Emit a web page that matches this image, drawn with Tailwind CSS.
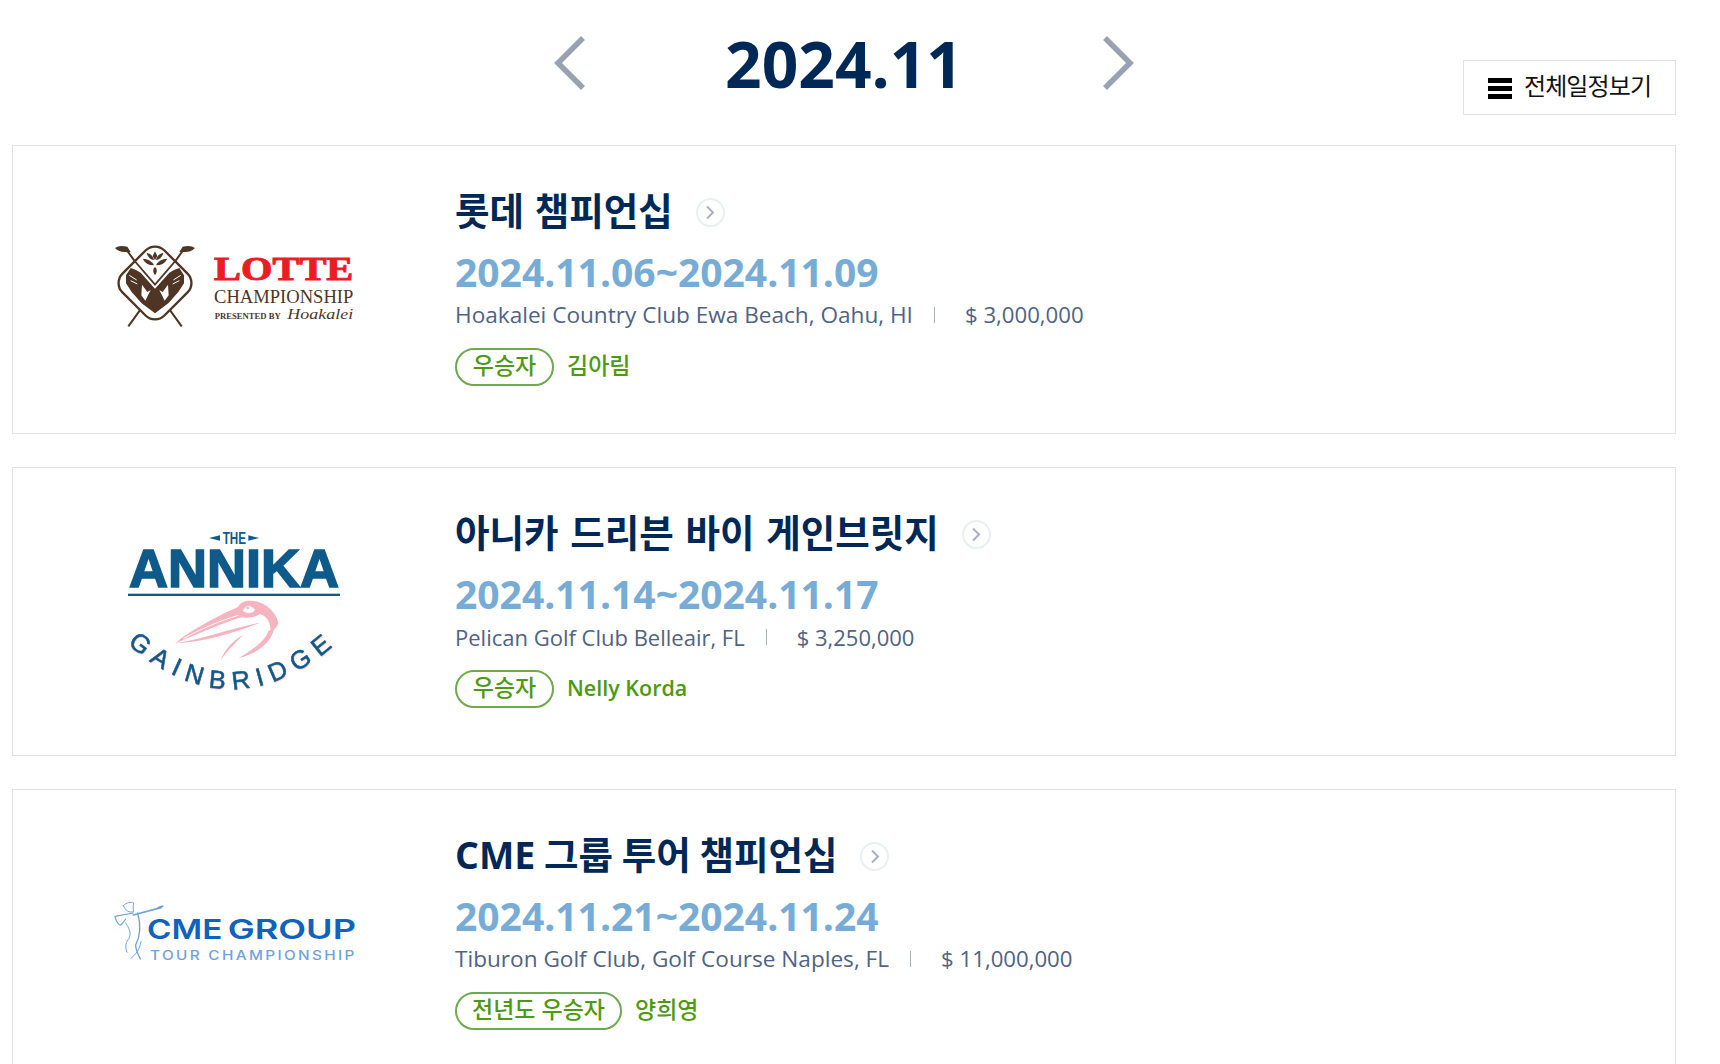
<!DOCTYPE html>
<html lang="ko">
<head>
  <meta charset="UTF-8" />
  <title>대회일정</title>
  <script src="https://cdn.jsdelivr.net/npm/@tailwindcss/browser@4"></script>
</head>
<body class="bg-white h-screen overflow-hidden font-['Open_Sans','Noto_Sans_CJK_KR',sans-serif]">

  <!-- 월 선택 -->
  <div class="relative h-[145px] mx-[12px]">
    <div class="flex items-start pl-[541px]">
      <button class="mt-[36px] w-[34px]">
        <svg width="34" height="54" viewBox="0 0 34 54" fill="none" stroke="#98a2b3" stroke-width="5.5"><path d="M30 2 L5 27 L30 52" /></svg>
      </button>
      <div class="w-[514px] text-center text-[64px] leading-[64px] mt-[32px] font-bold text-[#002856]">2024.11</div>
      <button class="mt-[36px] w-[34px]">
        <svg width="34" height="54" viewBox="0 0 34 54" fill="none" stroke="#98a2b3" stroke-width="5.5"><path d="M4 2 L29 27 L4 52" /></svg>
      </button>
    </div>
    <a class="absolute right-[32px] top-[60px] w-[213px] h-[55px] border border-[#e2e2e2] flex items-center pl-[24px] gap-[12px] text-[24px] tracking-[-0.9px] text-[#111]">
      <span class="w-[24px] h-[21px] flex flex-col justify-between mt-[2px]">
        <i class="block h-[5px] bg-black"></i><i class="block h-[5px] bg-black"></i><i class="block h-[5px] bg-black"></i>
      </span>
      <span class="pb-[3px]">전체일정보기</span>
    </a>
  </div>

  <div class="flex flex-col gap-[33px] ml-[12px] w-[1664px]">

    <!-- 롯데 -->
    <div class="flex h-[289px] border border-[#e2e2e2]">
      <div class="w-[442px] shrink-0 flex items-center">
        <svg class="ml-[77px] mb-[13px]" width="300" height="130" viewBox="0 0 900 390">
          <g transform="translate(60 60)">
            <path d="M50 36 L215 265 M220 36 L55 265" stroke="#4f3524" stroke-width="6" fill="none" />
            <path d="M15 30 Q28 20 52 26 L62 42 L48 42 Q28 44 15 30z M255 30 Q242 20 218 26 L208 42 L222 42 Q242 44 255 30z" fill="#4f3524" />
            <rect x="-89" y="-89" width="178" height="178" rx="40" fill="#fff" stroke="#4f3524" stroke-width="7" transform="translate(135 135) rotate(45)" />
            <path d="M75 70 L135 140 L195 70" fill="none" stroke="#4f3524" stroke-width="5" />
            <path d="M48 112 L62 90 L78 96 L92 104 L135 152 L178 104 L192 96 L208 90 L222 112 L222 136 L205 162 L175 196 L135 226 L95 196 L65 162 L48 136z" fill="#4f3524" />
            <path d="M58 112 L80 126 M62 128 L82 138 M212 112 L190 126 M208 128 L188 138" stroke="#fff" stroke-width="3" fill="none" />
            <path d="M96 140 L112 162 L122 156 L114 172 L106 188 L94 172z M174 140 L158 162 L148 156 L156 172 L164 188 L176 172z" fill="#fff" />
            <path d="M110 44 Q128 48 133 66 Q114 64 110 44z M160 44 Q142 48 137 66 Q156 64 160 44z M135 40 L142 54 L135 66 L128 54z M98 62 Q122 62 132 82 Q108 82 98 62z M172 62 Q148 62 138 82 Q162 82 172 62z M135 86 Q146 98 135 112 Q124 98 135 86z" fill="#4f3524" />
          </g>
          <text x="372" y="187" textLength="418" lengthAdjust="spacingAndGlyphs" font-family="Liberation Serif" font-weight="700" font-size="101" stroke="#ed1c24" stroke-width="3" fill="#ed1c24">LOTTE</text>
          <text x="372" y="254" textLength="418" lengthAdjust="spacingAndGlyphs" font-family="Liberation Serif" font-size="59" fill="#4f3524">CHAMPIONSHIP</text>
          <text x="374" y="304" textLength="198" lengthAdjust="spacingAndGlyphs" font-family="Liberation Serif" font-weight="700" font-size="27" fill="#4f3524">PRESENTED BY</text>
          <text x="592" y="304" textLength="198" lengthAdjust="spacingAndGlyphs" font-family="Liberation Serif" font-style="italic" font-size="46" fill="#4f3524">Hoakalei</text>
        </svg>
      </div>
      <div class="pt-[43px]">
        <div class="flex items-center h-[44px]">
          <h2 class="text-[37.5px] [word-spacing:1px] font-bold leading-[44px] text-[#002856]">롯데 챔피언십</h2>
          <span class="ml-[23px] mt-[2px] w-[29px] h-[29px] rounded-full border-2 border-[#eceff1] flex items-center justify-center">
            <svg width="10" height="15" viewBox="0 0 10 15" fill="none" stroke="#a9afbd" stroke-width="2"><path d="M2 1.5 L8 7.5 L2 13.5" /></svg>
          </span>
        </div>
        <p class="mt-[19px] h-[40px] text-[39px] leading-[40px] font-bold text-[#76acd6]">2024.11.06~2024.11.09</p>
        <div class="mt-[8px] h-[30px] flex items-center text-[22.6px] leading-[30px] text-[#4f6384]">
          <span>Hoakalei Country Club Ewa Beach, Oahu, HI</span>
          <i class="block ml-[21px] mr-[30px] w-px h-[16px] bg-[#a9b1bd]"></i>
          <span class="text-[22.2px]">$ 3,000,000</span>
        </div>
        <div class="mt-[18px] flex items-center">
          <span class="h-[38px] w-[99px] rounded-full border-2 border-[#6ea94c] flex items-center justify-center text-[23px] font-medium pb-[3px] text-[#4e9a0e]">우승자</span>
          <span class="ml-[13px] text-[23px] font-medium pb-[3px] text-[#4e9a0e]">김아림</span>
        </div>
      </div>
    </div>

    <!-- 아니카 -->
    <div class="flex h-[289px] border border-[#e2e2e2]">
      <div class="w-[442px] shrink-0 flex items-center">
        <svg class="ml-[97px] mb-[4px]" width="250" height="180" viewBox="0 0 750 540">
          <path d="M297 54 L330 46 L330 62z M448 54 L415 46 L415 62z" fill="#0e5a8a" />
          <text x="338" y="72" textLength="70" lengthAdjust="spacingAndGlyphs" font-family="Liberation Sans" font-weight="700" font-size="50" fill="#0e5a8a">THE</text>
          <text x="57" y="202" textLength="630" lengthAdjust="spacingAndGlyphs" font-family="Liberation Sans" font-weight="700" font-size="160" stroke="#0e5a8a" stroke-width="5" fill="#0e5a8a">ANNIKA</text>
          <rect x="54" y="221" width="636" height="7" fill="#0e5a8a" />
          <g transform="translate(180 210)">
            <path d="M15 160 C60 120 150 75 205 50 C210 38 225 30 250 33 C290 38 320 70 325 100 C320 115 310 120 300 130 C305 105 295 80 270 72 C255 82 235 85 215 82 C150 100 80 135 15 160z" fill="#f7b3c0" />
            <path d="M40 146 C90 118 150 92 205 76 M60 145 C110 125 160 105 215 90" stroke="#fff" stroke-width="3" fill="none" />
            <path d="M218 62 C225 44 245 42 256 60 C248 72 230 74 218 62z" fill="#fff" stroke="#f7b3c0" stroke-width="2" />
            <circle cx="233" cy="54" r="4" fill="#f7b3c0" />
            <path d="M15 160 C90 150 180 115 270 98 C200 125 110 155 15 160z" fill="#f7b3c0" />
            <path d="M220 135 C190 150 165 178 152 210 C172 182 195 160 220 135z" fill="#f7b3c0" />
            <path d="M295 122 C285 155 245 180 205 205 C255 192 300 165 312 118z" fill="#f7b3c0" />
          </g>
          <path id="gainArc" d="M52 372 Q375 652 700 352" fill="none" />
          <text class="[filter:drop-shadow(1px_2px_0_#f7b3c0)]" font-family="Liberation Sans" font-size="76" letter-spacing="23" stroke="#0e5a8a" stroke-width="1.5" fill="#0e5a8a"><textPath href="#gainArc" startOffset="0">GAINBRIDGE</textPath></text>
        </svg>
      </div>
      <div class="pt-[43px]">
        <div class="flex items-center h-[44px]">
          <h2 class="text-[37.5px] [word-spacing:2px] font-bold leading-[44px] text-[#002856]">아니카 드리븐 바이 게인브릿지</h2>
          <span class="ml-[23px] mt-[2px] w-[29px] h-[29px] rounded-full border-2 border-[#eceff1] flex items-center justify-center">
            <svg width="10" height="15" viewBox="0 0 10 15" fill="none" stroke="#a9afbd" stroke-width="2"><path d="M2 1.5 L8 7.5 L2 13.5" /></svg>
          </span>
        </div>
        <p class="mt-[19px] h-[40px] text-[39px] leading-[40px] font-bold text-[#76acd6]">2024.11.14~2024.11.17</p>
        <div class="mt-[8px] h-[30px] flex items-center text-[22px] leading-[30px] text-[#4f6384]">
          <span>Pelican Golf Club Belleair, FL</span>
          <i class="block ml-[21px] mr-[30px] w-px h-[16px] bg-[#a9b1bd]"></i>
          <span>$ 3,250,000</span>
        </div>
        <div class="mt-[18px] flex items-center">
          <span class="h-[38px] w-[99px] rounded-full border-2 border-[#6ea94c] flex items-center justify-center text-[23px] font-medium pb-[3px] text-[#4e9a0e]">우승자</span>
          <span class="ml-[13px] text-[21.5px] font-semibold pb-[1px] text-[#4e9a0e]">Nelly Korda</span>
        </div>
      </div>
    </div>

    <!-- CME -->
    <div class="flex h-[289px] border border-[#e2e2e2]">
      <div class="w-[442px] shrink-0 flex items-center">
        <svg class="ml-[87px] mt-[2px]" width="270" height="90" viewBox="0 0 810 270">
          <g transform="translate(15 15)" fill="none" stroke="#6ea2dc" stroke-linecap="round">
            <path d="M85 60 L168 38" stroke-width="5" />
            <path d="M160 38 L172 34" stroke-width="6" />
            <path d="M55 32 C65 22 78 20 86 24 C84 34 84 42 86 50 C72 54 62 48 55 32" stroke-width="3" />
            <path d="M30 64 L85 54 M30 66 C34 80 42 92 48 90 C54 84 58 78 62 72" stroke-width="3.5" />
            <path d="M62 84 C72 100 80 112 72 130 C64 142 58 150 66 172" stroke-width="3" />
            <path d="M98 54 C108 90 108 120 92 150 C92 165 100 180 106 192" stroke-width="4" />
            <path d="M108 140 C104 165 92 178 78 190" stroke-width="3" />
          </g>
          <text x="141" y="146" textLength="226" lengthAdjust="spacingAndGlyphs" font-family="Inter" font-weight="600" font-size="82" fill="#0f62bd">CME</text>
          <text x="383" y="146" textLength="385" lengthAdjust="spacingAndGlyphs" font-family="Inter" font-weight="600" font-size="82" fill="#0f62bd">GROUP</text>
          <text x="150" y="211" textLength="620" lengthAdjust="spacingAndGlyphs" font-family="Inter" font-weight="500" font-size="39" letter-spacing="6" fill="#6ea2dc">TOUR CHAMPIONSHIP</text>
        </svg>
      </div>
      <div class="pt-[43px]">
        <div class="flex items-center h-[44px]">
          <h2 class="text-[37.5px] [word-spacing:-1px] font-bold leading-[44px] text-[#002856]">CME 그룹 투어 챔피언십</h2>
          <span class="ml-[23px] mt-[2px] w-[29px] h-[29px] rounded-full border-2 border-[#eceff1] flex items-center justify-center">
            <svg width="10" height="15" viewBox="0 0 10 15" fill="none" stroke="#a9afbd" stroke-width="2"><path d="M2 1.5 L8 7.5 L2 13.5" /></svg>
          </span>
        </div>
        <p class="mt-[19px] h-[40px] text-[39px] leading-[40px] font-bold text-[#76acd6]">2024.11.21~2024.11.24</p>
        <div class="mt-[8px] h-[30px] flex items-center text-[22.6px] leading-[30px] text-[#4f6384]">
          <span>Tiburon Golf Club, Golf Course Naples, FL</span>
          <i class="block ml-[21px] mr-[30px] w-px h-[16px] bg-[#a9b1bd]"></i>
          <span class="text-[22.2px]">$ 11,000,000</span>
        </div>
        <div class="mt-[18px] flex items-center">
          <span class="h-[38px] w-[167px] rounded-full border-2 border-[#6ea94c] flex items-center justify-center text-[23px] font-medium pb-[3px] text-[#4e9a0e]">전년도 우승자</span>
          <span class="ml-[13px] text-[23px] font-medium pb-[3px] text-[#4e9a0e]">양희영</span>
        </div>
      </div>
    </div>

  </div>
</body>
</html>
